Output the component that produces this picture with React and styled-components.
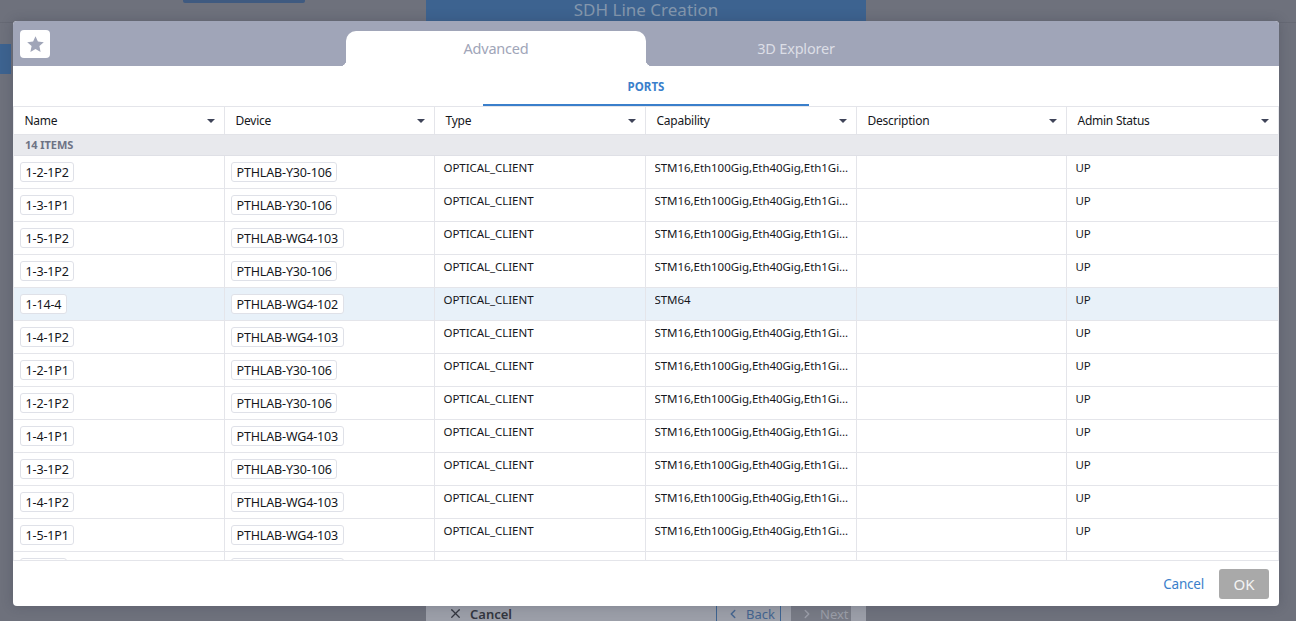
import React from "react";
import styled, { createGlobalStyle } from "styled-components";
import { X, ChevronLeft, ChevronRight } from "lucide-react";

const COLUMNS = ["Name", "Device", "Type", "Capability", "Description", "Admin Status"];
const MULTI = "STM16,Eth100Gig,Eth40Gig,Eth1Gig,Eth10Gig";
const Y30 = "PTHLAB-Y30-106";
const WG3 = "PTHLAB-WG4-103";

const ROWS = [
  { name: "1-2-1P2", device: Y30, capability: MULTI },
  { name: "1-3-1P1", device: Y30, capability: MULTI },
  { name: "1-5-1P2", device: WG3, capability: MULTI },
  { name: "1-3-1P2", device: Y30, capability: MULTI },
  { name: "1-14-4", device: "PTHLAB-WG4-102", capability: "STM64", selected: true },
  { name: "1-4-1P2", device: WG3, capability: MULTI },
  { name: "1-2-1P1", device: Y30, capability: MULTI },
  { name: "1-2-1P2", device: Y30, capability: MULTI },
  { name: "1-4-1P1", device: WG3, capability: MULTI },
  { name: "1-3-1P2", device: Y30, capability: MULTI },
  { name: "1-4-1P2", device: WG3, capability: MULTI },
  { name: "1-5-1P1", device: WG3, capability: MULTI },
  { name: "1-14-3", device: "PTHLAB-WG4-102", capability: "STM64" },
  { name: "1-14-2", device: "PTHLAB-WG4-102", capability: "STM64" },
];

const App = () => {
  return (
    <Page>
      <GlobalStyle />
      <BackTop>
        <BackMark />
        <BackTitle>SDH Line Creation</BackTitle>
      </BackTop>
      <BackStripe />
      <BackBottom>
        <BackBar>
          <BackCancel>
            <X size={15} strokeWidth={2} />
            Cancel
          </BackCancel>
          <BackPrev>
            <ChevronLeft size={14} strokeWidth={2.5} />
            Back
          </BackPrev>
          <BackNext>
            <ChevronRight size={14} strokeWidth={2.5} />
            Next
          </BackNext>
        </BackBar>
      </BackBottom>

      <Modal>
        <TabBar>
          <StarButton>
            <svg width="17" height="16" viewBox="0 0 17 16" fill="currentColor">
              <polygon points="8.5,0.2 10.9,5.6 16.8,6.2 12.4,10.1 13.6,15.9 8.5,12.9 3.4,15.9 4.6,10.1 0.2,6.2 6.1,5.6" />
            </svg>
          </StarButton>
          <Tab $active>Advanced</Tab>
          <Tab>3D Explorer</Tab>
        </TabBar>
        <SubTabs>
          <SubTab>PORTS</SubTab>
        </SubTabs>
        <Table>
          <HeaderRow>
            {COLUMNS.map((col) => (
              <HeaderCell key={col}>
                {col}
                <SortCaret />
              </HeaderCell>
            ))}
          </HeaderRow>
          <GroupRow>14 ITEMS</GroupRow>
          {ROWS.map((row, i) => (
            <Row key={i} $selected={row.selected}>
              <Cell $chip>
                <Chip>{row.name}</Chip>
              </Cell>
              <Cell $chip>
                <Chip>{row.device}</Chip>
              </Cell>
              <Cell>OPTICAL_CLIENT</Cell>
              <Cell>
                <Clipped>{row.capability}</Clipped>
              </Cell>
              <Cell />
              <Cell>UP</Cell>
            </Row>
          ))}
        </Table>
        <Footer>
          <CancelLink>Cancel</CancelLink>
          <OkButton>OK</OkButton>
        </Footer>
      </Modal>
    </Page>
  );
};

const GlobalStyle = createGlobalStyle`
  html, body {
    margin: 0;
    padding: 0;
    height: 100%;
    overflow: hidden;
  }
  body {
    font-family: "Noto Sans", "Open Sans", sans-serif;
    color: #15171c;
  }
  * {
    box-sizing: border-box;
  }
`;

const Page = styled.div`
  position: relative;
  display: flex;
  flex-direction: column;
  width: 1296px;
  height: 621px;
  overflow: hidden;
  background-color: #6e717c;
`;

const BackTop = styled.div`
  display: flex;
  justify-content: space-between;
  align-items: flex-start;
  height: 23px;
  padding: 0 430px 0 183px;
  border-bottom: 1px solid #666974;
`;

const BackMark = styled.div`
  width: 122px;
  height: 3px;
  border-radius: 0 0 2px 2px;
  background-color: #3f5a80;
`;

const BackTitle = styled.div`
  width: 440px;
  height: 21px;
  text-align: center;
  font-size: 17px;
  line-height: 20px;
  color: #8497ad;
  background-color: #3d6390;
`;

const BackStripe = styled.div`
  width: 11px;
  height: 30px;
  margin-top: 21px;
  background-color: #3d6390;
`;

const BackBottom = styled.div`
  display: flex;
  justify-content: flex-start;
  margin-top: auto;
  padding-left: 426px;
`;

const BackBar = styled.div`
  display: flex;
  align-items: center;
  width: 440px;
  height: 15px;
  padding: 0 15px 0 22px;
  font-size: 13px;
  font-weight: 600;
  background-color: #9b9ea8;
`;

const BackCancel = styled.div`
  display: flex;
  align-items: center;
  gap: 7px;
  width: 268px;
  color: #33363f;
`;

const BackPrev = styled.div`
  display: flex;
  align-items: center;
  gap: 6px;
  width: 65px;
  height: 15px;
  padding-left: 9px;
  font-weight: 400;
  color: #44648f;
  border-left: 1px solid #3d6390;
  border-right: 1px solid #3d6390;
`;

const BackNext = styled.div`
  display: flex;
  align-items: center;
  gap: 6px;
  width: 60px;
  height: 15px;
  margin-left: 10px;
  padding-left: 9px;
  font-weight: 400;
  color: #9b9ea8;
  background-color: #777a85;
`;

const Modal = styled.div`
  position: absolute;
  top: 21px;
  left: 13px;
  display: flex;
  flex-direction: column;
  width: 1266px;
  height: 585px;
  overflow: hidden;
  border-radius: 4px;
  background-color: #fff;
  box-shadow: 0 0 12px rgba(40, 44, 60, 0.25);
`;

const TabBar = styled.div`
  display: flex;
  align-items: flex-end;
  flex-shrink: 0;
  height: 45px;
  padding-left: 7px;
  background-color: #a0a5b8;
`;

const StarButton = styled.div`
  display: flex;
  align-items: center;
  justify-content: center;
  align-self: flex-start;
  width: 30px;
  height: 28px;
  margin-top: 9px;
  margin-right: 296px;
  border-radius: 4px;
  color: #a0a5b8;
  background-color: #fff;
`;

const Tab = styled.div`
  position: relative;
  width: 300px;
  height: 35px;
  text-align: center;
  font-size: 14.5px;
  line-height: 35px;
  letter-spacing: -0.2px;
  border-radius: 10px 10px 0 0;
  color: ${(p) => (p.$active ? "#a0a5b8" : "#dcdee6")};
  background-color: ${(p) => (p.$active ? "#fff" : "transparent")};

  ${(p) =>
    p.$active &&
    `
    &::before, &::after {
      content: "";
      position: absolute;
      bottom: 0;
      width: 6px;
      height: 6px;
    }
    &::before {
      left: -6px;
      background: radial-gradient(circle at 0 0, transparent 6px, #fff 6.5px);
    }
    &::after {
      right: -6px;
      background: radial-gradient(circle at 100% 0, transparent 6px, #fff 6.5px);
    }
  `}
`;

const SubTabs = styled.div`
  display: flex;
  justify-content: center;
  flex-shrink: 0;
  height: 40px;
`;

const SubTab = styled.div`
  width: 326px;
  height: 40px;
  text-align: center;
  font-size: 11.5px;
  font-weight: 700;
  line-height: 42px;
  color: #3a7fcb;
  border-bottom: 2px solid #3a7fcb;
`;

const Table = styled.div`
  flex: 1;
  min-height: 0;
  overflow: hidden;
  border-top: 1px solid #e4e5ea;
  border-left: 1px solid #e8e9ed;
  border-right: 1px solid #e8e9ed;
`;

const HeaderRow = styled.div`
  display: grid;
  grid-template-columns: 211px 210px 211px 211px 210px 1fr;
  height: 28px;
  border-bottom: 1px solid #e2e3e8;
`;

const HeaderCell = styled.div`
  display: flex;
  align-items: center;
  justify-content: space-between;
  padding: 0 9px 0 10.5px;
  font-size: 12px;
  letter-spacing: -0.25px;
  border-right: 1px solid #e4e5ea;

  &:last-child {
    border-right: none;
  }
`;

const SortCaret = styled.span`
  width: 0;
  height: 0;
  border-left: 4px solid transparent;
  border-right: 4px solid transparent;
  border-top: 4px solid #3f4459;
`;

const GroupRow = styled.div`
  height: 21px;
  padding-left: 11px;
  font-size: 11px;
  font-weight: 700;
  line-height: 20px;
  letter-spacing: -0.05px;
  color: #6e7385;
  background-color: #e8e9ed;
  border-bottom: 1px solid #dfe0e6;
`;

const Row = styled.div`
  display: grid;
  grid-template-columns: 211px 210px 211px 211px 210px 1fr;
  height: 33px;
  background-color: ${(p) => (p.$selected ? "#e8f1f9" : "#fff")};
  border-bottom: 1px solid #e4e5ea;
`;

const Cell = styled.div`
  min-width: 0;
  padding: ${(p) => (p.$chip ? "6px 0 0 6px" : "3px 6px 0 8.5px")};
  font-size: 11.5px;
  line-height: 18px;
  letter-spacing: -0.05px;
  border-right: 1px solid #e4e5ea;

  &:last-child {
    border-right: none;
  }
`;

const Chip = styled.span`
  display: inline-block;
  height: 20px;
  padding: 0 4.5px;
  font-size: 12.5px;
  line-height: 20px;
  letter-spacing: -0.15px;
  white-space: nowrap;
  border: 1px solid #dfe1e8;
  border-radius: 3px;
  background-color: #fff;
`;

const Clipped = styled.div`
  overflow: hidden;
  white-space: nowrap;
  text-overflow: ellipsis;
`;

const Footer = styled.div`
  display: flex;
  align-items: center;
  justify-content: flex-end;
  flex-shrink: 0;
  height: 46px;
  padding: 0 10px 0 0;
  border-top: 1px solid #e4e5ea;
`;

const CancelLink = styled.div`
  margin-right: 15px;
  font-size: 13.5px;
  letter-spacing: -0.2px;
  color: #3a7fcb;
`;

const OkButton = styled.div`
  width: 50px;
  height: 30px;
  text-align: center;
  font-size: 15px;
  line-height: 30px;
  border-radius: 3px;
  color: #f4f4f4;
  background-color: #a9a9a9;
`;

export default App;
